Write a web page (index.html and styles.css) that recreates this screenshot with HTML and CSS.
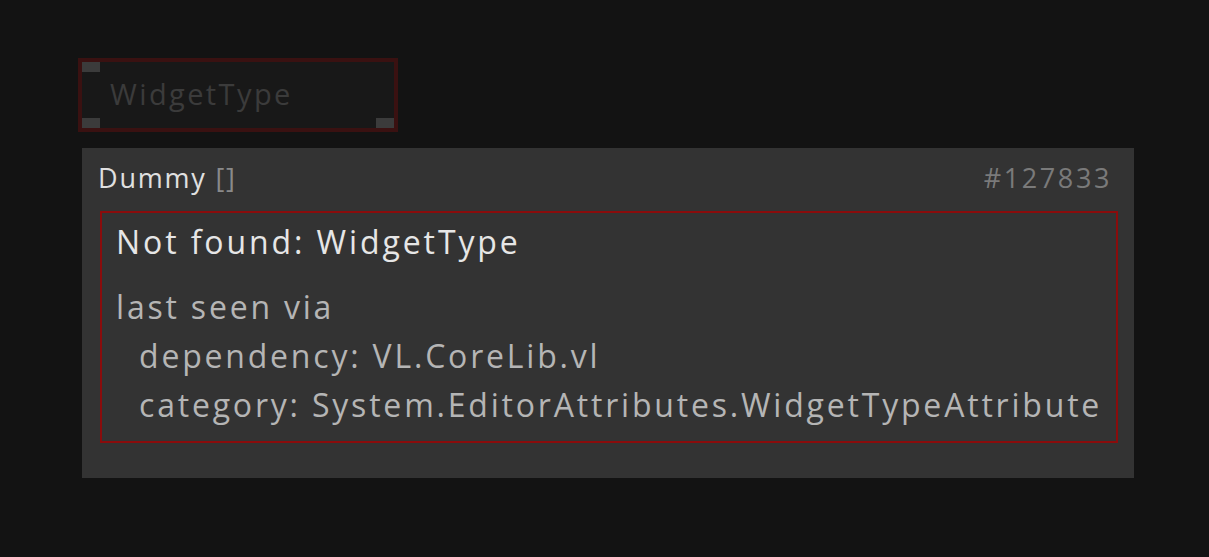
FILE: index.html
```html
<!DOCTYPE html>
<html>
<head>
<meta charset="utf-8">
<link rel="stylesheet" href="styles.css">
</head>
<body>
<div class="canvas">
  <div class="node">
    <span class="pin pin-tl"></span>
    <span class="pin pin-bl"></span>
    <span class="pin pin-br"></span>
    <span class="node-label">WidgetType</span>
  </div>
  <div class="tooltip">
    <div class="tip-head">
      <span class="tip-title">Dummy <span class="tip-dim">[]</span></span>
      <span class="tip-id">#127833</span>
    </div>
    <div class="error-box">
      <div class="err-title">Not found: WidgetType</div>
      <div class="err-body">
        <div class="err-line">last seen via</div>
        <div class="err-line indent">dependency: VL.CoreLib.vl</div>
        <div class="err-line indent">category: System.EditorAttributes.WidgetTypeAttribute</div>
      </div>
    </div>
  </div>
</div>
</body>
</html>
```
FILE: styles.css
```css
html, body {
  margin: 0;
  padding: 0;
  background: #131313;
  width: 1209px;
  height: 557px;
  overflow: hidden;
  font-family: "Open Sans", "Noto Sans", sans-serif;
}
.canvas {
  display: flex;
  flex-direction: column;
  align-items: flex-start;
  padding: 58px 0 0 78px;
}
.node {
  position: relative;
  box-sizing: border-box;
  width: 320px;
  height: 74px;
  border: 4px solid #3a1111;
  background: #181818;
  display: flex;
  align-items: center;
  padding-left: 28px;
}
.node-label {
  color: #3b3b3b;
  font-size: 29px;
  letter-spacing: 2.4px;
  line-height: 1;
  margin-top: -3px;
}
.pin {
  position: absolute;
  width: 18px;
  height: 10px;
  background: #3b3b3b;
}
.pin-tl { left: 0; top: 0; }
.pin-bl { left: 0; bottom: 0; }
.pin-br { right: 0; bottom: 0; }
.tooltip {
  margin: 16px 0 0 4px;
  box-sizing: border-box;
  width: 1052px;
  height: 330px;
  background: #333333;
  padding: 10px 24px 0 16px;
  display: flex;
  flex-direction: column;
}
.tip-head {
  display: flex;
  justify-content: space-between;
  align-items: baseline;
  height: 53px;
  font-size: 27px;
  line-height: 40px;
}
.tip-title { color: #e0e0e0; letter-spacing: 1.8px; }
.tip-dim { color: #8a8a8a; }
.tip-id { color: #7a7a7a; letter-spacing: 2.6px; margin-right: -2px; }
.error-box {
  box-sizing: border-box;
  width: 1018px;
  height: 232px;
  margin-left: 2px;
  border: 2px solid #8a0c0c;
  padding: 7px 0 0 14px;
}
.err-title {
  color: #e6e6e6;
  font-size: 32px;
  line-height: 44px;
  letter-spacing: 2.9px;
}
.err-body {
  margin-top: 18px;
  color: #b5b5b5;
  font-size: 32px;
  line-height: 49px;
  letter-spacing: 2.8px;
}
.indent { padding-left: 23px; }
```
